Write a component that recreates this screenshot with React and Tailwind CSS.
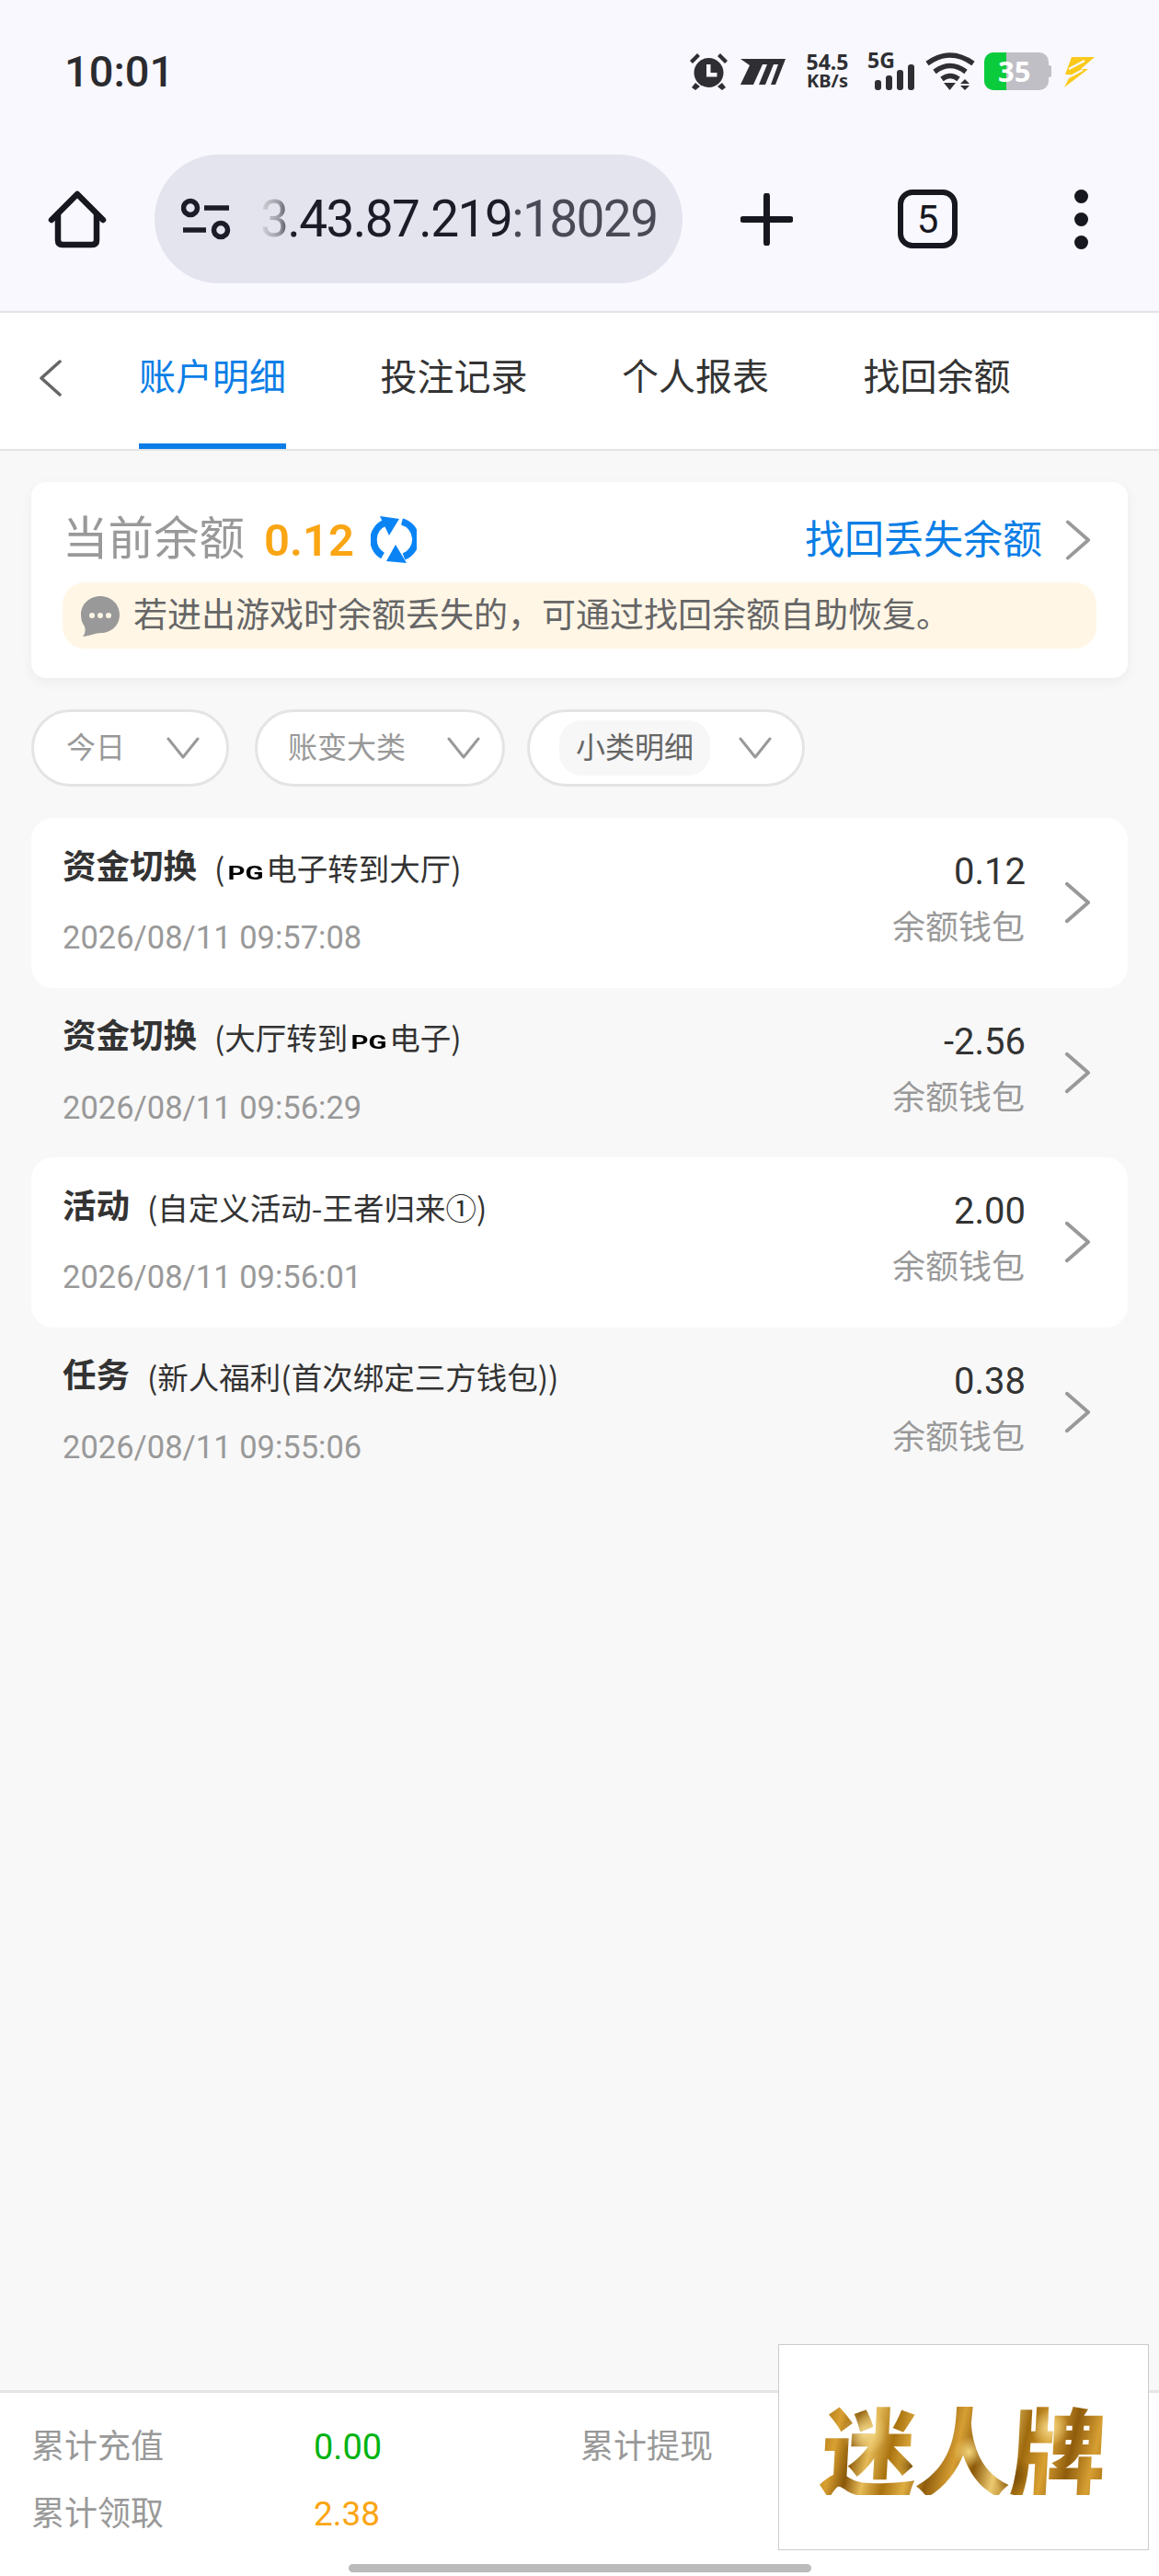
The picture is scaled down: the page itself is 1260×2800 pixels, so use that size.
const rows = [
    { title: "资金切换", sub: <>(<Pg />电子转到大厅)</>, time: "2026/08/11 09:57:08", amount: "0.12", card: true },
    { title: "资金切换", sub: <>(大厅转到<Pg />电子)</>, time: "2026/08/11 09:56:29", amount: "-2.56", card: false },
    { title: "活动", sub: "(自定义活动-王者归来①)", time: "2026/08/11 09:56:01", amount: "2.00", card: true },
    { title: "任务", sub: "(新人福利(首次绑定三方钱包))", time: "2026/08/11 09:55:06", amount: "0.38", card: false },
];

function Pg() {
    return (
        <span className="inline-flex justify-center w-[45px] align-[1px]">
            <span className="inline-block scale-x-[1.4] text-[21px] font-bold text-black font-['Roboto',sans-serif]">PG</span>
        </span>
    );
}

function Chevron({ className }) {
    return (
        <svg viewBox="0 0 30 46" className={className} fill="none" stroke="#999999" strokeWidth="4">
            <path d="M3 2 L27 23 L3 44" strokeLinecap="round" strokeLinejoin="round" />
        </svg>
    );
}

function Caret() {
    return (
        <svg viewBox="0 0 36 24" className="w-[36px] h-[24px]" fill="none" stroke="#999999" strokeWidth="3">
            <path d="M2 2 L18 22 L34 2" strokeLinecap="round" strokeLinejoin="round" />
        </svg>
    );
}

function StatusIcons() {
    return (
        <div className="flex items-center text-[#2f2f33]">
            <svg viewBox="0 0 41 41" className="w-[41px] h-[41px]" fill="#2f2f33">
                <circle cx="20.5" cy="22" r="16" />
                <path d="M18 13 h4.500 v9 h7 v4.500 h-11.500z" fill="#f8f8fe" />
                <path d="M0 9 L8 1 L11 4 L3 12z M41 9 L33 1 L30 4 L38 12z M6 33 L11 37 L6 41 L2 38z M35 33 L30 37 L35 41 L39 38z" />
            </svg>
            <svg viewBox="0 0 49 28" className="w-[49px] h-[28px] ml-[14px]" fill="#2f2f33">
                <path d="M0 0 H49 L38 28 H33 L41 6 H36 L27 28 H20 L29 6 H24 L14 28 H0 L10 7z" />
            </svg>
            <div className="ml-[19px] w-[53px] flex flex-col items-center font-['Noto_Sans',sans-serif] font-bold">
                <div className="h-[21px] flex items-center text-[23px]">54.5</div>
                <div className="h-[20px] flex items-center text-[20px]">KB/s</div>
            </div>
            <div className="relative ml-[17px] w-[51px] h-[41px]">
                <span className="absolute left-0 top-[-4px] font-['Noto_Sans',sans-serif] font-bold text-[23px] leading-[24px]">5G</span>
                <div className="absolute bottom-0 right-0 flex items-end gap-[5px]">
                    <div className="w-[7px] h-[11px] rounded-[3px] bg-[#2f2f33]" />
                    <div className="w-[7px] h-[16px] rounded-[3px] bg-[#2f2f33]" />
                    <div className="w-[7px] h-[22px] rounded-[3px] bg-[#2f2f33]" />
                    <div className="w-[7px] h-[28px] rounded-[3px] bg-[#2f2f33]" />
                </div>
            </div>
            <svg viewBox="0 0 54 41" className="w-[54px] h-[41px] ml-[12px]" fill="none" stroke="#2f2f33" strokeWidth="5.500">
                <path d="M2 12 Q27 -6 52 12" />
                <path d="M10 21 Q27 8 44 21" />
                <path d="M18 29 Q27 22 36 29" />
                <path d="M20 33 H33 L26.500 41z M43 29 L48 34 H38z M38 36 H48 L43 41z" fill="#2f2f33" stroke="none" />
            </svg>
            <div className="relative ml-[10px] w-[73px] h-[41px]">
                <div className="absolute left-0 top-0 h-full w-[70px] rounded-[10px] bg-[#c0bfc6] overflow-hidden">
                    <div className="h-full w-[24px] bg-[#0acb3c]" />
                </div>
                <div className="absolute right-0 top-[14px] w-[3px] h-[13px] rounded-r-[2px] bg-[#c0bfc6]" />
                <span className="absolute inset-y-0 left-[15px] flex items-center font-['Noto_Sans',sans-serif] font-bold text-[31px] text-white">35</span>
            </div>
            <svg viewBox="0 0 35 34" className="w-[35px] h-[34px] ml-[12px]" fill="#fbc91a">
                <path d="M10 1 H35 L20 14 H28 L2 34 L9 20 H3z" />
                <path d="M7 14 L24 5 M5 24 L22 15" stroke="#f8f8fe" strokeWidth="2" />
            </svg>
        </div>
    );
}

export default function App() {
    return (
        <div className="relative flex flex-col w-[1260px] h-[2800px] overflow-hidden bg-[#f8f8f8] font-['Roboto','Noto_Sans_CJK_SC',sans-serif]">
            {/* browser chrome */}
            <div className="bg-[#f8f8fe] border-b-2 border-[#e2e2ea] h-[340px] shrink-0">
                <div className="flex items-center justify-between pl-[70px] pr-[70px] pt-[57px] h-[98px]">
                    <span className="text-[47px] leading-[41px] font-medium text-[#2b2b2f]">10:01</span>
                    <StatusIcons />
                </div>
                <div className="flex items-center pl-[52px] mt-[70px]">
                    <svg viewBox="0 0 64 64" className="w-[64px] h-[64px]" fill="none" stroke="#17171f" strokeWidth="6.500" strokeLinecap="round">
                        <path d="M4 33 L32 5 L60 33" strokeLinejoin="round" />
                        <path d="M11 27 V55 Q11 60 16 60 H48 Q53 60 53 55 V27" />
                    </svg>
                    <div className="ml-[52px] w-[574px] h-[140px] rounded-full bg-[#e4e4ef] flex items-center pl-[29px]">
                        <svg viewBox="0 0 54 46" className="w-[54px] h-[46px]" fill="none" stroke="#1c1c28" strokeWidth="5.500">
                            <circle cx="10" cy="11" r="7.500" />
                            <path d="M25 11 H52 M2 35 H27" />
                            <circle cx="43" cy="35" r="7.500" />
                        </svg>
                        <span className="ml-[32px] text-[55px] leading-none font-normal tracking-[-1.600px] whitespace-nowrap">
                            <span className="bg-[linear-gradient(to_right,#d5d5dc_0,#9d9da6_20px,#1c1c28_36px)] bg-clip-text text-transparent">3.43.87.219</span>
                            <span className="text-[#4a4a56]">:18029</span>
                        </span>
                    </div>
                    <svg viewBox="0 0 57 57" className="ml-[63px] w-[57px] h-[57px]" fill="none" stroke="#17171f" strokeWidth="7" strokeLinecap="round">
                        <path d="M28.500 3 V54 M3 28.500 H54" />
                    </svg>
                    <div className="ml-[114px] w-[65px] h-[64px] rounded-[16px] border-[6px] border-[#17171f] flex items-center justify-center text-[42px] font-normal text-[#17171f]">5</div>
                    <div className="ml-[127px] flex flex-col gap-[10px]">
                        <div className="w-[15px] h-[15px] rounded-full bg-[#17171f]" />
                        <div className="w-[15px] h-[15px] rounded-full bg-[#17171f]" />
                        <div className="w-[15px] h-[15px] rounded-full bg-[#17171f]" />
                    </div>
                </div>
            </div>

            {/* tabs */}
            <div className="flex items-center h-[150px] shrink-0 bg-white border-b-2 border-[#e4e4e4] pl-[42px]">
                <svg viewBox="0 0 26 40" className="w-[26px] h-[40px] mt-[-6px]" fill="none" stroke="#666666" strokeWidth="3.500">
                    <path d="M23 2 L3 20 L23 38" strokeLinecap="round" strokeLinejoin="round" />
                </svg>
                <div className="flex h-full ml-[83px] gap-[102.500px]">
                    {["账户明细", "投注记录", "个人报表", "找回余额"].map((t, i) => (
                        <div key={t} className={`flex items-center w-[160px] text-[40px] border-b-[6px] ${i === 0 ? "text-[#0a7ee6] border-[#0a7ee6]" : "text-[#333333] border-transparent"}`}>{t}</div>
                    ))}
                </div>
            </div>

            {/* balance card */}
            <div className="mx-[34px] mt-[34px] h-[213px] shrink-0 bg-white rounded-[16px] shadow-[0_4px_14px_rgba(0,0,0,0.05)] px-[34px] pt-[34px]">
                <div className="flex items-center h-[58px]">
                    <span className="w-[197px] text-[49.500px] leading-none text-[#999999] whitespace-nowrap">当前余额</span>
                    <span className="ml-[22px] text-[49px] leading-none font-semibold text-[#faa514]">0.12</span>
                    <svg viewBox="0 0 50 52" className="ml-[18px] w-[50px] h-[52px]" fill="none" stroke="#0a84f5" strokeWidth="7.500">
                        <path d="M16 7 A20 20 0 0 0 13 43" />
                        <path d="M34 6 A20 20 0 0 1 36 44" />
                        <path d="M10 0 L31 3 L20 21z M17 49 L39 51 L27 31z" fill="#0a84f5" stroke="none" />
                    </svg>
                    <span className="ml-auto text-[43px] leading-none text-[#0a7ee6]">找回丢失余额</span>
                    <Chevron className="ml-[25px] mr-[6px] w-[28px] h-[44px]" />
                </div>
                <div className="flex items-center h-[72px] mt-[17px] rounded-[24px] bg-[#fff6e6] pl-[20px]">
                    <svg viewBox="0 0 42 46" className="w-[42px] h-[46px]" fill="#999999">
                        <path d="M21 2 C33 2 42 11 42 22 C42 34 33 42 21 42 C16 42 10 45 2 46 C5 42 5 39 4 35 C1 31 0 27 0 22 C0 11 9 2 21 2z" />
                        <circle cx="12" cy="23" r="3" fill="#fff6e6" />
                        <circle cx="21" cy="23" r="3" fill="#fff6e6" />
                        <circle cx="30" cy="23" r="3" fill="#fff6e6" />
                    </svg>
                    <span className="ml-[15px] text-[37px] leading-none text-[#666666] whitespace-nowrap">若进出游戏时余额丢失的，可通过找回余额自助恢复。</span>
                </div>
            </div>

            {/* filters */}
            <div className="flex mx-[34px] mt-[34px] h-[84px] shrink-0">
                <div className="w-[215px] rounded-full border-[3px] border-[#e4e4e4] bg-white flex items-center pl-[35px]">
                    <span className="w-[75px] text-[32px] text-[#999999]">今日</span>
                    <span className="ml-[34px]"><Caret /></span>
                </div>
                <div className="ml-[28px] w-[272px] rounded-full border-[3px] border-[#e4e4e4] bg-white flex items-center pl-[33px]">
                    <span className="w-[132px] text-[32px] text-[#999999] whitespace-nowrap">账变大类</span>
                    <span className="ml-[41px]"><Caret /></span>
                </div>
                <div className="ml-[24px] w-[302px] rounded-full border-[3px] border-[#e4e4e4] bg-white flex items-center pl-[32px]">
                    <span className="w-[164px] h-[60px] rounded-[24px] bg-[#f7f7f7] flex items-center justify-center text-[32px] text-[#666666] whitespace-nowrap">小类明细</span>
                    <span className="ml-[31px]"><Caret /></span>
                </div>
            </div>

            {/* records */}
            <div className="flex flex-col mx-[34px] mt-[34px] flex-1">
                {rows.map((r) => (
                    <div key={r.time} className={`flex h-[184.500px] shrink-0 rounded-[24px] pl-[34px] ${r.card ? "bg-white" : ""}`}>
                        <div className="flex-1 pt-[29px]">
                            <div className="flex items-center h-[50px] whitespace-nowrap">
                                <span className="text-[36.500px] font-bold text-[#333333]">{r.title}</span>
                                <span className="ml-[19px] text-[33.500px] text-[#333333] font-['Noto_Sans_CJK_SC',sans-serif]">{r.sub}</span>
                            </div>
                            <div className="mt-[30px] h-[44px] flex items-center text-[34.500px] text-[#999999]">{r.time}</div>
                        </div>
                        <div className="pt-[35px] text-right">
                            <div className="h-[48px] flex items-center justify-end text-[40px] text-[#333333] mr-[-1px]">{r.amount}</div>
                            <div className="mt-[15px] h-[44px] flex items-center text-[36px] text-[#999999]">余额钱包</div>
                        </div>
                        <div className="flex items-center ml-[43px] mr-[40px]">
                            <Chevron className="w-[29px] h-[46px]" />
                        </div>
                    </div>
                ))}
            </div>

            {/* totals */}
            <div className="h-[202px] shrink-0 bg-white border-t-[3px] border-[#e5e5e5] pt-[34px]">
                <div className="grid grid-cols-[307px_290px_1fr] gap-y-[23px] pl-[34px]">
                    <span className="h-[50px] flex items-center text-[36px] text-[#999999]">累计充值</span>
                    <span className="h-[50px] flex items-center text-[38px] text-[#00b312]">0.00</span>
                    <span className="h-[50px] flex items-center text-[36px] text-[#999999]">累计提现</span>
                    <span className="h-[50px] flex items-center text-[36px] text-[#999999]">累计领取</span>
                    <span className="h-[50px] flex items-center text-[37px] text-[#faa514]">2.38</span>
                </div>
                <div className="mx-auto mt-[29px] w-[503px] h-[9px] rounded-full bg-[#bbbbbb]" />
            </div>

            {/* floating logo */}
            <div className="absolute right-[11px] bottom-[28px] w-[403px] h-[224px] bg-white border border-[#cccccc] flex items-center justify-center">
                <span className="text-[104px] leading-none font-black -skew-x-3 tracking-[-1px] whitespace-nowrap bg-[radial-gradient(circle_at_15%_35%,#f7dd8e_0,transparent_9%),radial-gradient(circle_at_52%_55%,#f3d47c_0,transparent_10%),radial-gradient(circle_at_80%_30%,#f5d988_0,transparent_8%),radial-gradient(circle_at_33%_70%,#6f4506_0,transparent_8%),radial-gradient(circle_at_68%_80%,#7a4d08_0,transparent_9%),linear-gradient(100deg,#a8700f_0%,#d9a032_7%,#8a5809_13%,#e6bb58_19%,#a9720f_26%,#dfae42_33%,#8f5c0c_40%,#d79f33_48%,#8a5809_55%,#ecc96f_62%,#9f6a0e_70%,#d9a032_78%,#8f5c0c_86%,#d79f33_94%,#a8700f_100%)] bg-clip-text text-transparent font-['Noto_Sans_CJK_SC',sans-serif]">迷人牌</span>
            </div>
        </div>
    );
}
